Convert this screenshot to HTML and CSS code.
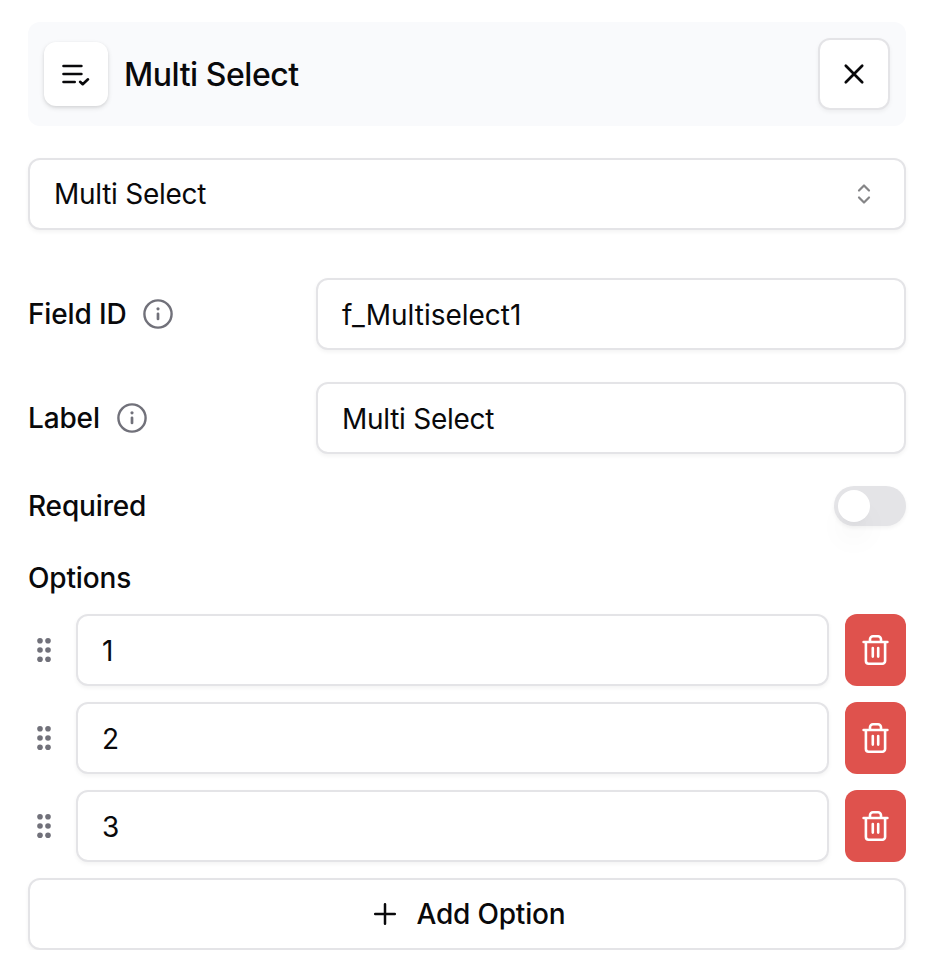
FILE: index.html
```
<!DOCTYPE html>
<html lang="en">
<head>
<meta charset="utf-8">
<title>Multi Select</title>
<link rel="stylesheet" href="styles.css">
</head>
<body>
<svg class="defs" width="0" height="0" aria-hidden="true">
  <symbol id="info" viewBox="0 0 30 30"><g fill="none" stroke="currentColor" stroke-width="2.4" stroke-linecap="round"><circle cx="15" cy="15" r="13.6"/><path d="M15 14.8v5.2" stroke-width="2.7"/></g><circle cx="15" cy="9.8" r="1.6" fill="currentColor"/></symbol>
  <symbol id="grip" viewBox="0 0 32 32"><g fill="currentColor"><circle cx="12" cy="6.7" r="2.8"/><circle cx="20" cy="6.7" r="2.8"/><circle cx="12" cy="16" r="2.8"/><circle cx="20" cy="16" r="2.8"/><circle cx="12" cy="25.3" r="2.8"/><circle cx="20" cy="25.3" r="2.8"/></g></symbol>
  <symbol id="trash" viewBox="0 0 32 32"><g fill="none" stroke="currentColor" stroke-width="2.6" stroke-linecap="round" stroke-linejoin="round"><path d="M3.6 8h23.8M10 8V5.3a3 3 0 0 1 3-3h5a3 3 0 0 1 3 3V8M5.9 8v19a2.7 2.7 0 0 0 2.7 2.7h13.8a2.7 2.7 0 0 0 2.7-2.7V8M12.8 14v8.6M18.2 14v8.6"/></g></symbol>
</svg>
<main class="panel">
  <header class="header">
    <div class="type-icon"><svg width="32" height="32" viewBox="0 0 32 32"><path d="M3.5 8H21.4M3.5 16H21.4M3.5 24H14.7M20.1 23.8l2.6 2.4 5.3-4.9"/></svg></div>
    <h1 class="title">Multi Select</h1>
    <button class="close" aria-label="Close"><svg width="28" height="28" viewBox="0 0 28 28"><path d="M5.8 5.8l16.4 16.4M22.2 5.8L5.8 22.2"/></svg></button>
  </header>
  <div class="field select"><span class="tight">Multi Select</span><svg width="28" height="28" viewBox="0 0 28 28"><path d="M9 10.5l5-5 5 5M9 17.5l5 5 5-5"/></svg></div>
  <div class="row"><div class="label">Field ID <svg class="info"><use href="#info"/></svg></div><div class="field">f_Multiselect1</div></div>
  <div class="row row-label"><div class="label">Label <svg class="info"><use href="#info"/></svg></div><div class="field tight">Multi Select</div></div>
  <div class="required"><div class="label">Required</div><div class="switch"><div class="thumb"></div></div></div>
  <div class="label options-label">Options</div>
  <div class="options">
    <div class="option"><svg class="icon grip"><use href="#grip"/></svg><div class="field">1</div><button class="delete" aria-label="Delete"><svg class="icon"><use href="#trash"/></svg></button></div>
    <div class="option"><svg class="icon grip"><use href="#grip"/></svg><div class="field">2</div><button class="delete" aria-label="Delete"><svg class="icon"><use href="#trash"/></svg></button></div>
    <div class="option"><svg class="icon grip"><use href="#grip"/></svg><div class="field">3</div><button class="delete" aria-label="Delete"><svg class="icon"><use href="#trash"/></svg></button></div>
    <button class="add"><svg width="28" height="28" viewBox="0 0 28 28"><path d="M4.2 14h19.6M14 4.2v19.6"/></svg>Add Option</button>
  </div>
</main>
</body>
</html>
```
FILE: styles.css
```
* { box-sizing: border-box; }
body { margin: 0; background: #fff; color: #09090b; font: 400 28px/40px Inter, "Liberation Sans", sans-serif; }
button { font: inherit; color: inherit; padding: 0; margin: 0; }
svg { display: block; flex: none; fill: none; stroke: currentColor; stroke-linecap: round; stroke-linejoin: round; }
.defs { position: absolute; }
symbol, .icon, .info { stroke: none; }
.panel { padding: 22px 30px 0 28px; }
.header { display: flex; align-items: center; height: 104px; padding: 0 16px; background: #f9fafc; border-radius: 12px; }
.type-icon { display: grid; place-items: center; width: 64px; height: 64px; background: #fff; border-radius: 12px; box-shadow: 0 2px 5px rgba(0,0,0,.12), 0 1px 3px rgba(0,0,0,.06); }
.type-icon svg { stroke-width: 2.6; }
.title { margin: 0 0 0 16px; padding-top: 2px; font-size: 32px; line-height: 40px; font-weight: 500; letter-spacing: -.45px; flex: 1; }
.close { display: grid; place-items: center; width: 72px; height: 72px; background: #fff; border: 2px solid #e4e4e7; border-radius: 12px; box-shadow: 0 2px 4px rgba(0,0,0,.05); }
.close svg { stroke-width: 2.7; }
.field { display: flex; align-items: center; flex: 1; height: 72px; padding: 2px 24px 0; background: #fff; border: 2px solid #e4e4e7; border-radius: 12px; box-shadow: 0 2px 4px rgba(0,0,0,.05); }
.tight { letter-spacing: -.27px; }
.select { justify-content: space-between; margin-top: 32px; padding: 0 26px 0 24px; }
.select svg { stroke: #858587; stroke-width: 2.2; }
.row { display: flex; margin-top: 48px; align-items: center; }
.row-label { margin-top: 32px; }
.row .label { width: 288px; display: flex; align-items: center; gap: 17px; }
.label { font-weight: 500; letter-spacing: -.15px; }
.info { width: 30px; height: 30px; color: #71717a; }
.required { display: flex; justify-content: space-between; align-items: center; margin-top: 32px; height: 40px; }
.switch { width: 72px; height: 40px; padding: 4px; border-radius: 20px; background: #e4e4e7; box-shadow: 0 2px 4px rgba(0,0,0,.05); }
.thumb { width: 32px; height: 32px; border-radius: 50%; background: #fff; box-shadow: 0 20px 30px -6px rgba(0,0,0,.08), 0 8px 12px -8px rgba(0,0,0,.06); }
.options-label { margin-top: 32px; }
.options { display: flex; flex-direction: column; gap: 16px; margin-top: 16px; }
.option { display: flex; align-items: center; gap: 16px; }
.icon { width: 32px; height: 32px; }
.grip { color: #71717a; }
.delete { display: grid; place-items: center; width: 61px; height: 72px; border: 0; border-radius: 12px; background: #df524d; color: #fff; }
.add { display: flex; align-items: center; justify-content: center; gap: 18px; height: 72px; padding-left: 2px; background: #fff; border: 2px solid #e4e4e7; border-radius: 12px; box-shadow: 0 2px 4px rgba(0,0,0,.05); font-weight: 500; letter-spacing: -.2px; }
.add svg { stroke-width: 2.5; }
```
